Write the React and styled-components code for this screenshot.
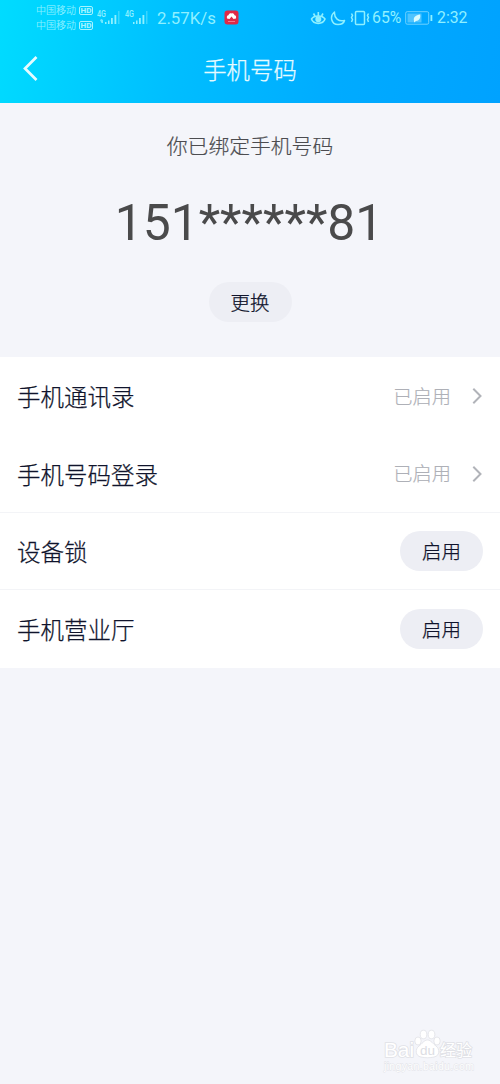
import React from "react";
import styled, { createGlobalStyle } from "styled-components";

const GlobalStyle = createGlobalStyle`
  * { box-sizing: border-box; }
  body {
    margin: 0;
    background: #f4f5fa;
    font-family: Roboto, "Noto Sans CJK SC", sans-serif;
  }
`;

const Screen = styled.div`
  position: relative;
  width: 500px;
  height: 1084px;
  background: #f4f5fa;
  overflow: hidden;
`;

const Header = styled.header`
  height: 103px;
  background: linear-gradient(100deg, #00dcff 0%, #00beff 36%, #00abff 68%, #00a2ff 100%);
`;

const StatusBar = styled.div`
  display: flex;
  align-items: center;
  height: 35px;
  padding-left: 36px;
  color: #8ff0ff;
`;

const Carriers = styled.div`
  display: flex;
  flex-direction: column;
  width: 61px;
`;

const Carrier = styled.div`
  display: flex;
  align-items: center;
  gap: 3px;
  height: 15px;
  font-size: 10px;
  line-height: 15px;
  font-weight: 300;
  -webkit-text-stroke: 0.15px currentColor;
  white-space: nowrap;
`;

const HdBadge = styled.span`
  width: 14px;
  height: 9px;
  border: 1px solid #a5f4ff;
  border-radius: 2px;
  color: #a5f4ff;
  font-size: 8px;
  font-weight: 700;
  line-height: 7.5px;
  text-align: center;
`;

const Item = styled.span`
  display: flex;
  flex: none;
  align-items: center;
  width: ${(p) => p.$w}px;
  font-size: ${(p) => p.$size || 16}px;
  line-height: 20px;
  white-space: nowrap;
  svg { display: block; }
`;

const TitleBar = styled.div`
  display: grid;
  grid-template-columns: 60px 1fr 60px;
  align-items: center;
  height: 68px;
  color: #e6fbff;
`;

const BackIcon = styled.svg`
  display: block;
  margin-left: 22px;
`;

const Title = styled.h1`
  margin: 4px 0 0;
  font-size: 23.4px;
  line-height: 34px;
  font-weight: 300;
  -webkit-text-stroke: 0.25px currentColor;
  text-align: center;
`;

const Summary = styled.section`
  display: flex;
  flex-direction: column;
  align-items: center;
  height: 254px;
  padding-top: 28px;
`;

const Caption = styled.p`
  margin: 0;
  font-size: 20.8px;
  line-height: 32px;
  font-weight: 300;
  -webkit-text-stroke: 0.2px currentColor;
  color: #4c4c50;
`;

const PhoneNumber = styled.div`
  margin-top: 29px;
  margin-right: 2px;
  font-size: 49.8px;
  line-height: 62px;
  color: #4a4a4b;
`;

const Pill = styled.button`
  width: 83px;
  height: 40px;
  padding: 4px 0 0;
  border: 0;
  border-radius: 20px;
  background: #edeef4;
  color: #10142c;
  font: inherit;
  font-size: 19.5px;
  font-weight: 300;
  line-height: 36px;
  -webkit-text-stroke: 0.25px currentColor;
  margin-top: ${(p) => p.$top || 0}px;
`;

const List = styled.section`
  height: 311px;
  background: #fff;
`;

const Row = styled.div`
  display: flex;
  align-items: center;
  justify-content: space-between;
  height: ${(p) => p.$h}px;
  padding: 0 17px;
  border-top: ${(p) => (p.$line ? "1px solid #f3f4f7" : "0")};
`;

const Label = styled.span`
  padding-top: 4px;
  font-size: 23.5px;
  line-height: 34px;
  font-weight: 300;
  -webkit-text-stroke: 0.25px currentColor;
  color: #10142c;
`;

const State = styled.span`
  display: flex;
  align-items: center;
  gap: 20px;
  color: #aeb0b7;
`;

const StateText = styled.span`
  padding-top: 3px;
  font-size: 19.3px;
  line-height: 30px;
  font-weight: 300;
  -webkit-text-stroke: 0.15px currentColor;
`;

const Watermark = styled.div`
  position: absolute;
  left: 382px;
  top: 1028px;
  width: 96px;
  height: 48px;
`;

const Signal = ({ dot }) => (
  <svg width="24" height="18" viewBox="0 0 24 18" fill="#8ff0ff">
    <text x="0" y="8" fontSize="9" fontWeight="500" textLength="9" lengthAdjust="spacingAndGlyphs">4G</text>
    {dot && <path d="M3 11l1.5-1 1.5 1v3H4.500z" opacity=".8" />}
    <rect x="8" y="13" width="1.500" height="2" />
    <rect x="11" y="11.500" width="1.500" height="3.500" />
    <rect x="14" y="9" width="1.800" height="6" />
    <rect x="17.500" y="6" width="1.800" height="9" />
    <rect x="21" y="2" width="1.500" height="13" opacity=".4" />
  </svg>
);

const Chevron = () => (
  <svg width="12" height="18" viewBox="0 0 12 18" fill="none" stroke="#b1b3b9" strokeWidth="2">
    <path d="M2.300 1.800L9.500 9L2.300 16.200" />
  </svg>
);

const StatusRow = ({ label, height }) => (
  <Row $h={height}>
    <Label>{label}</Label>
    <State><StateText>已启用</StateText><Chevron /></State>
  </Row>
);

const ActionRow = ({ label, height }) => (
  <Row $line $h={height}>
    <Label>{label}</Label>
    <Pill>启用</Pill>
  </Row>
);

export default function App() {
  return (
    <Screen>
      <GlobalStyle />
      <Header>
        <StatusBar>
          <Carriers>
            <Carrier>中国移动<HdBadge>HD</HdBadge></Carrier>
            <Carrier>中国移动<HdBadge>HD</HdBadge></Carrier>
          </Carriers>
          <Item $w={28}><Signal dot /></Item>
          <Item $w={32}><Signal /></Item>
          <Item $w={67} $size={16.8}>2.57K/s</Item>
          <Item $w={86}>
            <svg width="15" height="15" viewBox="0 0 15 15">
              <rect x=".5" y=".5" width="14" height="14" rx="3" fill="#df2947" />
              <path d="M3 8.500C2.500 6 3.500 5 4.500 5.200C5 3.500 6.500 3 7.500 3.500C8.500 3 10 3.500 10.500 5.200C11.500 5 12.500 6 12 8.500L9.500 9L7.500 6.500L5.500 9Z" fill="#fff" />
              <path d="M4 11.500h7" stroke="#f2788c" />
            </svg>
          </Item>
          <Item $w={20}>
            <svg width="17" height="16" viewBox="0 0 17 16" fill="none" stroke="#8ff0ff" strokeWidth="1.600">
              <path d="M1.500 9C4 5 12.500 5 15 9C13 14.800 3.500 14.800 1.500 9Z" />
              <circle cx="8.300" cy="9.300" r="2.200" fill="#8ff0ff" />
              <path d="M8.300 2v4M3.500 3.500l1.500 2.500M13 3.500l-1.500 2.500" />
            </svg>
          </Item>
          <Item $w={20}>
            <svg width="16" height="16" viewBox="0 0 16 16" fill="none" stroke="#8ff0ff" strokeWidth="1.500" strokeLinejoin="round">
              <path d="M4.500 2C-.5 6 1 14.500 8 14.500C11.500 14.500 14 12.500 14.500 10.500C8.500 12 4 8 4.500 2Z" />
            </svg>
          </Item>
          <Item $w={22}>
            <svg width="20" height="16" viewBox="0 0 20 16" fill="none" stroke="#8ff0ff" strokeWidth="1.500">
              <rect x="5.500" y="1.500" width="9" height="13" rx="1" />
              <path d="M1.500 3.500l1 2-1 2 1 2-1 2.500M18.500 3.500l-1 2 1 2-1 2 1 2.500" />
            </svg>
          </Item>
          <Item $w={33} $size={15.8}>65%</Item>
          <Item $w={32}>
            <svg width="28" height="14" viewBox="0 0 28 14">
              <rect x=".7" y=".7" width="23" height="12.500" rx="1.500" fill="none" stroke="#6fd2ff" />
              <rect x="2.500" y="2.500" width="14" height="9" fill="#4fc4ff" />
              <path d="M9 10C8 6 11 4 15 3.500C16 7 14 10 11 10L9 11.500Z" fill="#d8fbff" />
              <rect x="25.500" y="4" width="1.800" height="6" fill="#8ff0ff" />
            </svg>
          </Item>
          <Item $w={34} $size={15.8}>2:32</Item>
        </StatusBar>
        <TitleBar>
          <BackIcon width="18" height="28" viewBox="0 0 18 28" fill="none" stroke="#e6fbff" strokeWidth="2.700">
            <path d="M14.500 2L3 13.500L14.500 25" />
          </BackIcon>
          <Title>手机号码</Title>
        </TitleBar>
      </Header>

      <Summary>
        <Caption>你已绑定手机号码</Caption>
        <PhoneNumber>151******81</PhoneNumber>
        <Pill $top={28}>更换</Pill>
      </Summary>

      <List>
        <StatusRow label="手机通讯录" height={78} />
        <StatusRow label="手机号码登录" height={77} />
        <ActionRow label="设备锁" height={77} />
        <ActionRow label="手机营业厅" height={79} />
      </List>

      <Watermark>
        <svg width="96" height="48" viewBox="0 0 96 48" fill="#fff" stroke="#e0e1e6" strokeWidth=".8" fontFamily='"Liberation Sans", "Noto Sans CJK SC", sans-serif'>
          <g paintOrder="stroke" strokeWidth="1.600">
            <text x="2" y="29" fontSize="20" fontWeight="400" textLength="30" lengthAdjust="spacingAndGlyphs">Bai</text>
            <text x="58" y="28" fontSize="16" fontWeight="400" textLength="32">经验</text>
            <text x="2" y="42" fontSize="10.500" textLength="90" strokeWidth=".8">jingyan.baidu.com</text>
          </g>
          <ellipse cx="36" cy="13" rx="3.200" ry="4" />
          <ellipse cx="41.500" cy="6.500" rx="3.300" ry="4.300" />
          <ellipse cx="49.500" cy="6.500" rx="3.300" ry="4.300" />
          <ellipse cx="55" cy="13" rx="3.200" ry="4" />
          <path d="M45.500 12C49 12 51 16 54 18C58 21 58 28 52 29C48 30 43 30 39 29C33 28 33 21 37 18C40 16 42 12 45.500 12Z" />
          <text x="38" y="27" fontSize="13" textLength="15" fill="#dcdde3" stroke="none" fontWeight="400" lengthAdjust="spacingAndGlyphs">du</text>
        </svg>
      </Watermark>
    </Screen>
  );
}
